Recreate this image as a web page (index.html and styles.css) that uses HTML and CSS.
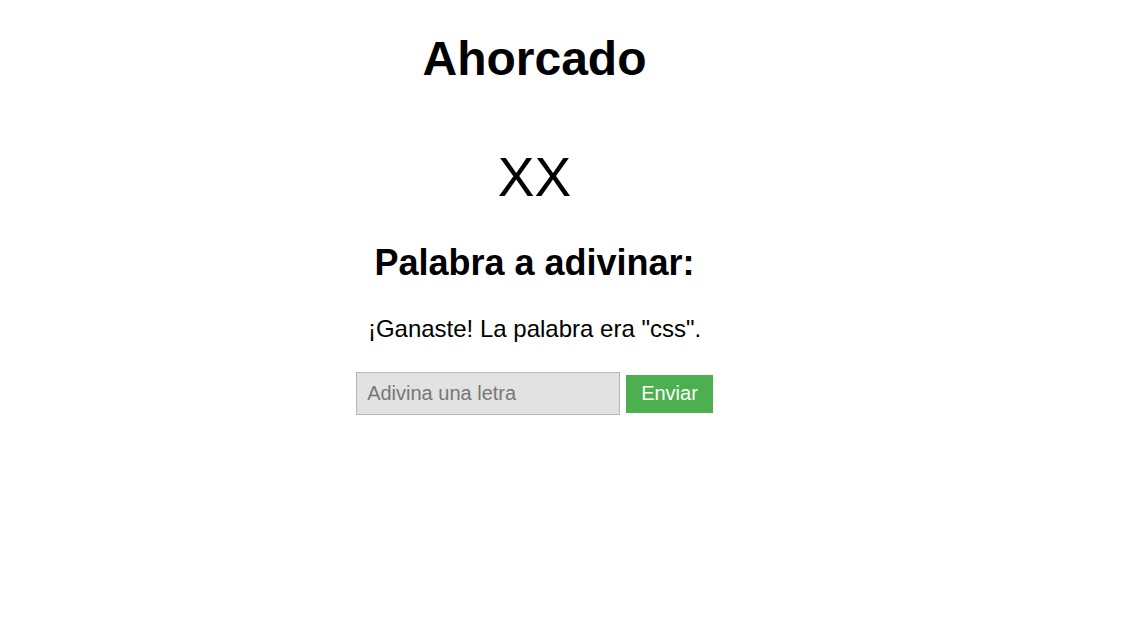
FILE: index.html
```html
<!DOCTYPE html>
<html lang="es">
<head>
<meta charset="utf-8">
<title>Ahorcado</title>
<link rel="stylesheet" href="styles.css">
</head>
<body>
<main class="game">
  <h1 class="title">Ahorcado</h1>
  <div class="misses">XX</div>
  <h2 class="subtitle">Palabra a adivinar:</h2>
  <p class="message">¡Ganaste! La palabra era "css".</p>
  <form class="guess">
    <input class="guess-input" type="text" placeholder="Adivina una letra">
    <button class="guess-button" type="button">Enviar</button>
  </form>
</main>
</body>
</html>
```
FILE: styles.css
```css
html, body {
  margin: 0;
  padding: 0;
  background: #ffffff;
}

body {
  font-family: "Liberation Sans", Arial, sans-serif;
  color: #000000;
}

.game {
  width: 1069px;
  display: flex;
  flex-direction: column;
  align-items: center;
  text-align: center;
}

.title {
  margin: 31px 0 0;
  font-size: 48px;
  font-weight: bold;
  line-height: 55px;
}

.misses {
  margin-top: 60px;
  font-size: 55px;
  line-height: 63px;
}

.subtitle {
  margin: 33px 0 0;
  font-size: 36px;
  font-weight: bold;
  line-height: 41px;
}

.message {
  margin: 32px 0 0;
  font-size: 24px;
  line-height: 28px;
}

.guess {
  margin-top: 29px;
  display: flex;
  align-items: center;
  gap: 6px;
}

.guess-input {
  box-sizing: border-box;
  width: 264px;
  height: 43px;
  padding: 0 10px;
  border: 1px solid #b8b8b8;
  background: #e2e2e2;
  font-family: "Liberation Sans", Arial, sans-serif;
  font-size: 20px;
  color: #000;
  outline: none;
}

.guess-input::placeholder {
  color: #777777;
}

.guess-button {
  box-sizing: border-box;
  height: 38px;
  padding: 0 15px;
  border: none;
  background: #4caf50;
  color: #ffffff;
  font-family: "Liberation Sans", Arial, sans-serif;
  font-size: 20px;
  cursor: pointer;
}
```
